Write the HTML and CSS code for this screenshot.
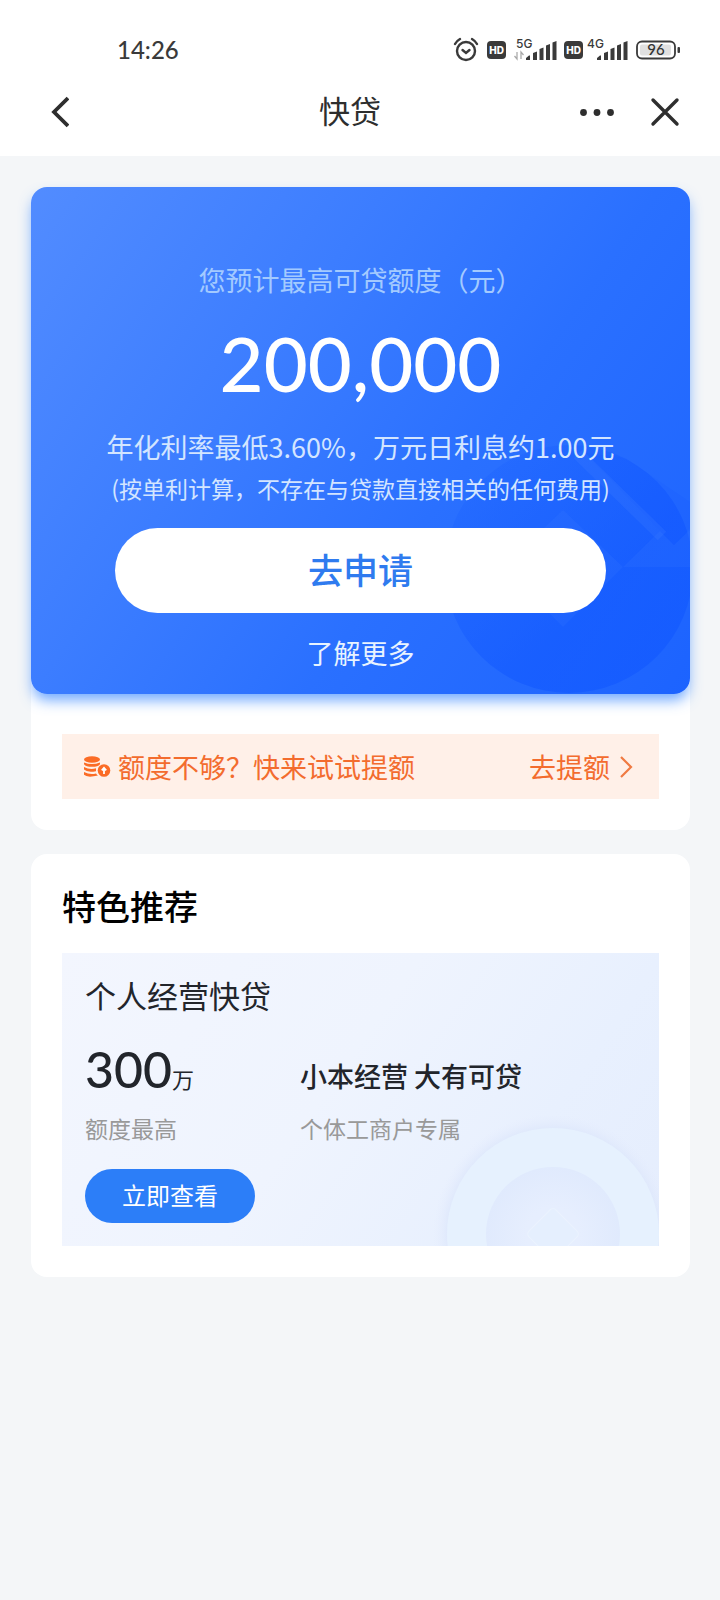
FILE: index.html
```html
<!DOCTYPE html>
<html lang="zh-CN">
<head>
<meta charset="utf-8">
<meta name="viewport" content="width=device-width, initial-scale=1">
<title>快贷</title>
<link rel="stylesheet" href="styles.css">
</head>
<body>
<header class="top">
  <div class="status">
    <span class="time">14:26</span>
    <svg class="status-icons" width="228" height="28" viewBox="0 0 228 28" aria-hidden="true">
      <g fill="none" stroke="#3a3a3a" stroke-width="2.4" stroke-linecap="round">
        <circle cx="13" cy="15" r="9"/>
        <path d="M9.500 14l3.500 3 3.500-3M2 8q1.500-3 5-5M24 8q-1.500-3-5-5"/>
      </g>
      <rect x="34" y="5" width="19" height="18" rx="4" fill="#3a3a3a"/>
      <text class="hd" x="43.500" y="18" text-anchor="middle">HD</text>
      <text class="net" x="63" y="12">5G</text>
      <g fill="none" stroke="#aaa" stroke-width="1.300"><path d="M64 16v7l-2.500-3M68 23v-7l2.500 3"/></g>
      <g fill="#3a3a3a">
        <path d="M73 24v-2l3-2.500h1V24zM80 24v-7l4-1.500V24zM86.500 24V13l4-1.500V24zM93 24V9.500L97 8v16zM99.500 24V6.500L103.500 5v19z"/>
        <rect x="111" y="5" width="19" height="18" rx="4"/>
        <path d="M144 24v-2l3-2.500h1V24zM151 24v-7l4-1.500V24zM157.500 24V13l4-1.500V24zM164 24V9.500l4-1.500v16zM170.500 24V6.500l4-1.500v19z"/>
        <rect x="224.500" y="11" width="2.500" height="6" rx="1"/>
      </g>
      <text class="hd" x="120.500" y="18" text-anchor="middle">HD</text>
      <text class="net" x="134" y="12">4G</text>
      <rect x="184" y="5.500" width="38" height="17" rx="5" fill="#fff" stroke="#3a3a3a" stroke-width="1.800"/>
      <rect x="187" y="8.500" width="31" height="11" rx="2" fill="#e0e0e0"/>
      <text class="charge" x="203" y="19" text-anchor="middle">96</text>
    </svg>
  </div>
  <nav class="nav">
    <div class="nav-side nav-left">
      <button class="icon-btn" type="button" aria-label="返回"><svg width="20" height="34" viewBox="0 0 20 34"><path d="M19 3L5 17l14 14" fill="none" stroke="#2e2e2e" stroke-width="3.800"/></svg></button>
    </div>
    <h1 class="nav-title">快贷</h1>
    <div class="nav-side nav-right">
      <button class="icon-btn" type="button" aria-label="更多"><svg width="36" height="10" viewBox="0 0 36 10" fill="#2e2e2e"><circle cx="4.500" cy="5.500" r="3.400"/><circle cx="18" cy="5.500" r="3.400"/><circle cx="31.500" cy="5.500" r="3.400"/></svg></button>
      <button class="icon-btn" type="button" aria-label="关闭"><svg width="30" height="30" viewBox="0 0 30 30"><path d="M3 3l24 24M27 3L3 27" fill="none" stroke="#2e2e2e" stroke-width="3.400" stroke-linecap="round"/></svg></button>
    </div>
  </nav>
</header>
<main class="page">
  <section class="card">
    <div class="hero">
      <svg class="hero-coin" width="250" height="254" viewBox="0 0 250 254" aria-hidden="true">
        <defs>
          <linearGradient id="disc" x1="0" y1="0" x2="1" y2="1"><stop offset="0" stop-color="#0a50ff" stop-opacity=".05"/><stop offset=".6" stop-color="#0a50ff" stop-opacity=".4"/></linearGradient>
        </defs>
        <circle cx="129" cy="129" r="124" fill="url(#disc)"/>
        <path d="M123 70l60 57-60 60-60-60zM183 127h67V90l-16 15-14-14z" fill="#5590ff" fill-opacity=".1"/>
        <path d="M145 13l89 92 16-17V62L185 18z" fill="#0a50ff" fill-opacity=".08"/>
        <path d="M138 14l84 82" stroke="#5c95ff" stroke-opacity=".14" stroke-width="12"/>
      </svg>
      <p class="hero-label">您预计最高可贷额度（元）</p>
      <p class="hero-amount">200,000</p>
      <p class="hero-rate">年化利率最低3.60%，万元日利息约1.00元</p>
      <p class="hero-note">(按单利计算，不存在与贷款直接相关的任何费用)</p>
      <button class="apply" type="button">去申请</button>
      <a class="more" href="#">了解更多</a>
    </div>
    <a class="raise" href="#">
      <svg class="raise-icon" width="28" height="24" viewBox="0 0 28 24" aria-hidden="true">
        <g fill="#fb6c26">
          <ellipse cx="8" cy="4.500" rx="8" ry="3.200"/>
          <path d="M0 7.500q8 3 16 0v1.700q-2 2.600-8 2.600T0 9.200zM0 12q6 3 12 1.200v3Q3 17.800 0 14.600zM0 17q6 3 12 1.400 1 1.400 2 2.200Q3 23 0 19.800z"/>
          <circle cx="20" cy="15.500" r="6.300"/>
        </g>
        <path d="M20 19v-5M17.800 15.300l2.200-2.500 2.200 2.500" fill="none" stroke="#fff" stroke-width="1.800"/>
      </svg>
      <span>额度不够？快来试试提额</span>
      <span class="raise-go">去提额</span>
      <svg width="14" height="22" viewBox="0 0 14 22" aria-hidden="true"><path d="M1 1l10 10L1 21" fill="none" stroke="#f07a42" stroke-width="2.200"/></svg>
    </a>
  </section>
  <section class="card featured">
    <h2 class="featured-title">特色推荐</h2>
    <article class="product">
      <svg class="product-coin" width="228" height="140" viewBox="0 0 228 140" aria-hidden="true">
        <defs>
          <radialGradient id="hole"><stop offset=".4" stop-color="#e6eefe"/><stop offset="1" stop-color="#e0eafd"/></radialGradient>
          <radialGradient id="halo"><stop offset=".86" stop-color="#dde7fb"/><stop offset="1" stop-color="#e6edfd" stop-opacity="0"/></radialGradient>
        </defs>
        <circle cx="122" cy="128" r="120" fill="url(#halo)"/>
        <circle cx="122" cy="128" r="106" fill="#e6f1fe"/>
        <circle cx="122" cy="128" r="67" fill="url(#hole)"/>
        <rect x="103" y="109" width="38" height="38" rx="4" fill="#e5effe" stroke="#ebf3fe" transform="rotate(45 122 128)"/>
      </svg>
      <h3 class="product-name">个人经营快贷</h3>
      <div class="facts">
        <div class="fact">
          <p class="fact-value"><span class="big">300</span><span class="unit">万</span></p>
          <p class="fact-label">额度最高</p>
        </div>
        <div class="fact">
          <p class="fact-value slogan">小本经营 大有可贷</p>
          <p class="fact-label">个体工商户专属</p>
        </div>
      </div>
      <button class="view" type="button">立即查看</button>
    </article>
  </section>
</main>
</body>
</html>
```
FILE: styles.css
```css
* { box-sizing: border-box; }
body {
  margin: 0;
  min-height: 100vh;
  background: #f4f6f8;
  color: #22252b;
  font-family: "Noto Sans CJK SC", sans-serif;
}
h1, h2, h3, p { margin: 0; }
button { font: inherit; border: 0; cursor: pointer; }
a { text-decoration: none; }

.top { background: #fff; padding-top: 32px; }
.status {
  display: flex;
  align-items: center;
  justify-content: space-between;
  height: 36px;
  padding: 0 39px 0 117px;
}
.time { font: 500 24px/36px Lato, sans-serif; color: #3a3a3a; }
.hd { font: 800 10px Inter, sans-serif; fill: #fff; }
.net { font: 500 12px Inter, sans-serif; fill: #3a3a3a; }
.charge { font: 500 15px Lato, sans-serif; fill: #333; }
.nav {
  display: grid;
  grid-template-columns: 1fr auto 1fr;
  align-items: center;
  height: 88px;
  padding: 0 40px 0 20px;
}
.nav-side { display: flex; align-items: center; }
.nav-left { padding-left: 29px; }
.nav-right { justify-content: flex-end; gap: 35px; }
.nav-title {
  padding-bottom: 4px;
  font-size: 31px;
  line-height: 44px;
  font-weight: 400;
  color: #2e2e2e;
}
.icon-btn { display: flex; padding: 0; background: none; }

.page { display: grid; gap: 24px; padding: 31px 30px 40px 31px; }
.card { background: #fff; border-radius: 16px; }

.hero {
  position: relative;
  display: flex;
  flex-direction: column;
  align-items: center;
  padding: 73px 20px 21px;
  border-radius: 16px;
  background: linear-gradient(125deg, #528cff 0%, #3c7dff 35%, #2a70ff 62%, #1c63ff 100%);
  color: #d3e5ff;
  text-align: center;
  box-shadow: 0 8px 14px -2px #3f8cffc0;
}
.hero-coin { position: absolute; right: 0; bottom: 0; border-radius: 0 0 16px 0; }
.hero > :not(.hero-coin) { position: relative; }
.hero-label { font-size: 27px; line-height: 40px; color: #a3caff; }
.hero-amount { margin-top: 23px; font: 500 76px/80px Lato, sans-serif; color: #fff; }
.hero-rate { margin-top: 24px; font-size: 27px; line-height: 40px; }
.hero-note { margin-top: 5px; font-size: 23px; line-height: 32px; }
.apply {
  width: 80%;
  max-width: 491px;
  height: 85px;
  margin-top: 24px;
  padding: 0 0 4px;
  border-radius: 43px;
  background: #fff;
  color: #2f7bef;
  font-size: 35px;
  font-weight: 500;
}
.more { margin-top: 20px; font-size: 27px; line-height: 40px; color: #e8f3ff; }

.raise {
  display: flex;
  align-items: center;
  margin: 40px 31px 0;
  padding: 0 25px 0 22px;
  height: 65px;
  background: #fff0e8;
  color: #f36c2e;
  font-size: 27px;
}
.raise-icon { margin-right: 6px; }
.raise-go { margin-left: auto; margin-right: 10px; }
.card:first-child { padding-bottom: 31px; }

.featured { padding: 28px 31px 31px; }
.featured-title { font-size: 34px; line-height: 48px; font-weight: 500; color: #000; }
.product {
  position: relative;
  margin-top: 23px;
  padding: 20px 23px 23px;
  overflow: hidden;
  background: linear-gradient(125deg, #f3f6fe 0%, #eff4fe 45%, #e8f0fe 75%, #e5edfd 100%);
}
.product > :not(.product-coin) { position: relative; }
.product-coin { position: absolute; right: 0; bottom: 0; }
.product-name { font-size: 31px; line-height: 44px; font-weight: 400; }
.facts { display: grid; grid-template-columns: 215px 1fr; margin-top: 22px; }
.fact-value { display: flex; align-items: baseline; height: 60px; line-height: 60px; }
.big { font: 500 50px/60px Lato, sans-serif; }
.unit { font-size: 22px; }
.slogan { padding-top: 7px; font-size: 27px; font-weight: 500; white-space: nowrap; }
.fact-label { margin-top: 12px; font-size: 23px; line-height: 34px; color: #999; }
.view {
  display: block;
  width: 170px;
  height: 54px;
  margin-top: 24px;
  padding: 0 0 3px;
  border-radius: 27px;
  background: #2c7ef8;
  color: #fff;
  font-size: 24px;
}
```
